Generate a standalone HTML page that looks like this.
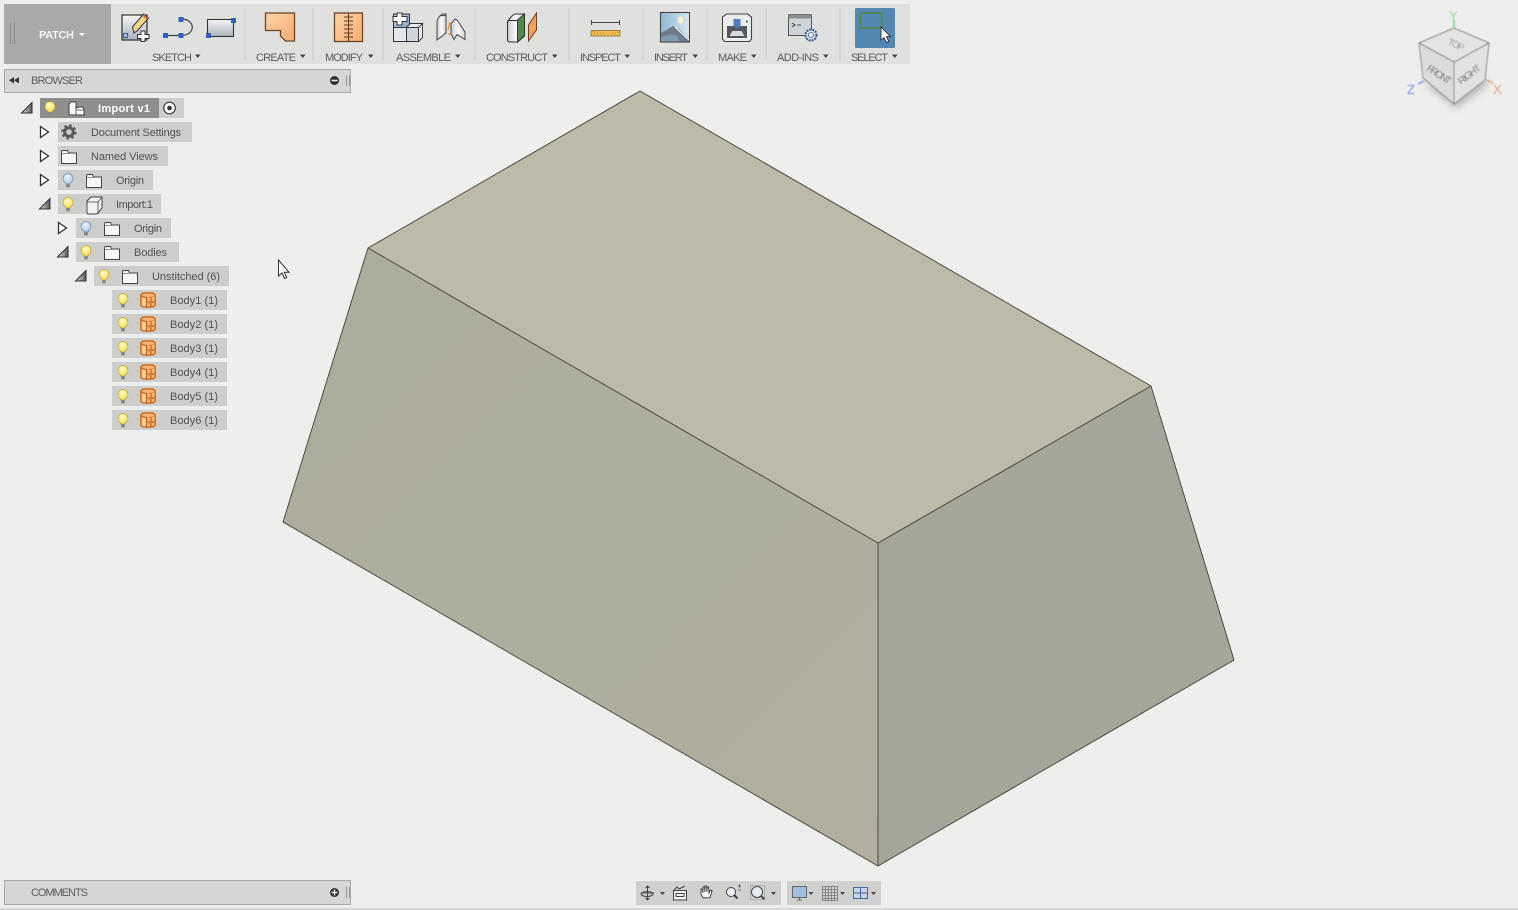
<!DOCTYPE html>
<html><head><meta charset="utf-8"><title>Fusion 360</title>
<style>
html,body{margin:0;padding:0;background:#eeeeed;width:1518px;height:910px;overflow:hidden}
svg{display:block}
text{font-family:"Liberation Sans",sans-serif}
.l{font-size:11px;fill:#5c5c5c}
.t{font-size:11px;fill:#525252}
</style></head><body>
<svg width="1518" height="910" viewBox="0 0 1518 910" xmlns="http://www.w3.org/2000/svg">
<defs>
<linearGradient id="gs" x1="0" y1="0" x2="0" y2="1"><stop offset="0" stop-color="#f6f6f6"/><stop offset="1" stop-color="#a9b2bc"/></linearGradient>
<linearGradient id="gw" x1="0" y1="0" x2="1" y2="0"><stop offset="0" stop-color="#c8ccd0"/><stop offset=".5" stop-color="#fafafa"/><stop offset="1" stop-color="#d0d3d6"/></linearGradient>
<linearGradient id="go" x1="0" y1="0" x2="1" y2="1"><stop offset="0" stop-color="#fdd2a4"/><stop offset="1" stop-color="#f6ae72"/></linearGradient>
<linearGradient id="gb" x1="0" y1="0" x2="1" y2="1"><stop offset="0" stop-color="#c8d8ea"/><stop offset="1" stop-color="#7fa3cc"/></linearGradient>
<linearGradient id="sky" x1="0" y1="0" x2="1" y2="0"><stop offset="0" stop-color="#8fb8d4"/><stop offset="1" stop-color="#d6e6ef"/></linearGradient>
<linearGradient id="tri" x1="0" y1="0" x2="1" y2="0"><stop offset="0" stop-color="#e8e8e8"/><stop offset="1" stop-color="#555"/></linearGradient>
<linearGradient id="lf" gradientUnits="userSpaceOnUse" x1="330" y1="300" x2="870" y2="850"><stop offset="0" stop-color="#adad9d"/><stop offset=".75" stop-color="#afae9e"/><stop offset="1" stop-color="#b3ae9f"/></linearGradient>
<radialGradient id="by" cx=".45" cy=".35" r=".7"><stop offset="0" stop-color="#fffdc4"/><stop offset="1" stop-color="#fbdc4a"/></radialGradient>
<radialGradient id="bb" cx=".45" cy=".35" r=".7"><stop offset="0" stop-color="#f0f6fc"/><stop offset="1" stop-color="#a5c3e4"/></radialGradient>
<symbol id="by1" viewBox="0 0 12 15" overflow="visible"><path d="M6 .6a4.900 4.900 0 0 0-2.700 9c.5.300.7.800.7 1.400h4c0-.6.200-1.100.7-1.400A4.900 4.900 0 0 0 6 .6z" fill="url(#by)" stroke="#c4a540" stroke-width=".8"/><rect x="4" y="11" width="4" height="3.400" rx="1.200" fill="#8a8a82"/></symbol>
<symbol id="bb1" viewBox="0 0 12 15" overflow="visible"><path d="M6 .6a4.900 4.900 0 0 0-2.700 9c.5.300.7.800.7 1.400h4c0-.6.200-1.100.7-1.400A4.900 4.900 0 0 0 6 .6z" fill="url(#bb)" stroke="#6f8fb4" stroke-width=".8"/><rect x="4" y="11" width="4" height="3.400" rx="1.200" fill="#80868c"/></symbol>
<symbol id="fld" viewBox="0 0 16 14" overflow="visible"><path d="M.5 1.500a1 1 0 0 1 1-1h5l1 2.500h8v10.500h-15z" fill="#f7f7f6" stroke="#444" stroke-width="1"/><path d="M.5 3.500h7" fill="none" stroke="#666" stroke-width=".7"/></symbol>
<symbol id="body" viewBox="0 0 16 16" overflow="visible"><path d="M.8 3C.8 .2 15.200 .2 15.200 3v10c0 2.800-14.400 2.800-14.400 0z" fill="#f7b278" stroke="#d4711f" stroke-width="1.500"/><path d="M1 3.500c1.500 1.500 4 2 5.500 2V15" fill="none" stroke="#d4711f" stroke-width="1.400"/><path d="M6.500 5.500c3 0 6-.6 8.500-2" fill="none" stroke="#e28a3c" stroke-width="1"/><path d="M11 5v10M7 10h8" stroke="#d4711f" stroke-width="1.400"/><rect x="2.200" y="6" width="3.300" height="7.500" fill="#fcd6b2"/></symbol>
<filter id="blur" x="-40%" y="-40%" width="180%" height="180%"><feGaussianBlur stdDeviation="4"/></filter>
<filter id="soft" x="-10%" y="-10%" width="120%" height="120%"><feGaussianBlur stdDeviation=".45"/></filter>
</defs>

<rect width="1518" height="910" fill="#eeeeed"/>

<!-- solid -->
<polygon points="640,91 1151,386 878,543 368,248" fill="#bdbaa9"/>
<polygon points="368,248 878,543 878,866 283,522" fill="url(#lf)"/>
<polygon points="878,543 1151,386 1234,660 878,866" fill="#a5a599"/>
<path d="M640 91L1151 386L1234 660L878 866L283 522L368 248Z M368 248L878 543L1151 386 M878 543V866" fill="none" stroke="#40403a" stroke-width=".9"/>

<!-- toolbar -->
<rect x="4" y="4" width="906" height="60" fill="#e0e0df"/>
<rect x="4" y="4" width="107" height="60" fill="#a9a9a7"/>
<path d="M10.500 22v22M14.500 22v22" stroke="#8b8b89" stroke-width="1"/>
<text x="39" y="38.500" font-size="11" font-weight="bold" fill="#f2f2f2" textLength="35">PATCH</text>
<path d="M79 33h6l-3 3.500z" fill="#f2f2f2"/>
<g stroke="#cfcfce" stroke-width="1.500"><path d="M245 8v52M313 8v52M383 8v52M475 8v52M569 8v52M643 8v52M707 8v52M766 8v52M840 8v52"/></g>

<!-- sketch icons -->
<rect x="122" y="15" width="25" height="25" fill="url(#gs)" stroke="#333" stroke-width="1.200"/>
<path d="M134 33l-1.500-6 11-13 5 4-11 12.500z" fill="#f7d88a" stroke="#333" stroke-width="1"/>
<path d="M143 15l4.500 3.500" stroke="#c9664a" stroke-width="2.200"/>
<rect x="123.500" y="33.500" width="4" height="4" fill="none" stroke="#2f65c0" stroke-width="1.200"/>
<path d="M141 31h4v3.500h4v4h-4v3h-4v-3h-3.500v-4h3.500z" fill="#fff" stroke="#333" stroke-width="1"/>
<path d="M165 35.500H181C196 35.500 196 19 181 19" fill="none" stroke="#3c4048" stroke-width="1.200"/>
<g fill="#2f62bf"><rect x="163" y="33" width="5" height="5"/><rect x="178.500" y="33" width="5" height="5"/><rect x="178.500" y="17" width="5" height="5"/></g>
<rect x="207.500" y="19.500" width="26" height="17" fill="url(#gs)" stroke="#333" stroke-width="1.100"/>
<rect x="206" y="33" width="5" height="5" fill="#2f62bf"/><rect x="231" y="18" width="5" height="5" fill="#2f62bf"/>

<!-- create -->
<path d="M265.500 13h29v28h-9l-5-5v-5.500h-15z" fill="url(#go)" stroke="#6b4326" stroke-width="1.300"/>
<!-- modify -->
<rect x="334.500" y="13" width="28" height="28.500" fill="url(#go)" stroke="#6b4326" stroke-width="1.300"/>
<path d="M348.500 13v28M344 17h9M344 21h9M344 25h9M344 29h9M344 33h9M344 37h9" stroke="#5e3b22" stroke-width="1"/>
<!-- assemble -->
<path d="M393.500 14h16v13.500h-16z" fill="url(#gb)" stroke="#333" stroke-width="1"/>
<rect x="393.500" y="27.500" width="13" height="14" fill="#e3e7ec" stroke="#333"/>
<rect x="406.500" y="27.500" width="12" height="14" fill="#ced4db" stroke="#333"/>
<path d="M418.500 27.500l4-4v14l-4 4zM406.500 27.500l4-4h12l-4 4z" fill="#eceef0" stroke="#333" stroke-width=".9"/>
<path d="M397 13h5v3.500h5v5h-5v3.500h-5v-3.500h-4v-5h4z" fill="#fff" stroke="#333"/>
<path d="M437 40V22c0-3 4-8 6-8h3v19zM441 16c2-1 5-1 5 1" fill="url(#gw)" stroke="#444"/>
<path d="M451 34V24l4-5 2 1 8 12v7.500l-8-5-3 5z" fill="url(#gw)" stroke="#444"/>
<path d="M448 30l2-8M448 34h3" stroke="#e28f2c" stroke-width="1.300"/>

<!-- construct -->
<path d="M507.500 23c0-3 6-9 8-9h9v22l-7 6h-8c-1 0-2-1-2-2z" fill="url(#gw)" stroke="#333" stroke-width="1.100"/>
<path d="M517.500 20l7-6v22l-7 6z" fill="#4f8a48" stroke="#333"/>
<path d="M507.500 20.500h10" stroke="#333"/>
<path d="M528.500 25l8-12v17l-8 11z" fill="#f0a25c" stroke="#6e3f20"/>
<!-- inspect -->
<path d="M591.500 20v5M619.500 20v5M591.500 22.500h28" stroke="#444" stroke-width="1"/>
<rect x="591" y="30.500" width="29" height="5.500" fill="#eebd50" stroke="#8e7028" stroke-width=".8"/>
<path d="M593 31v2h25v-2" fill="none" stroke="#b58f30" stroke-width="1.200" stroke-dasharray="1 2"/>
<!-- insert -->
<rect x="660.500" y="12.500" width="29" height="29.500" fill="url(#sky)" stroke="#444" stroke-width="1.100"/>
<ellipse cx="680.500" cy="20" rx="2.800" ry="3.800" fill="#fbf1d2"/>
<path d="M661 41.500V33l12-7 6 3 10 10v2.500z" fill="#6e7b88"/>
<path d="M661 41.500V37l10-3 6 2 3 5.500z" fill="#7f9bb2"/>
<path d="M675 27l14 13" stroke="#edf2f6" stroke-width="1.200"/>
<!-- make -->
<path d="M722.500 17l4-3h21l4 3v22l-2 2.500h-25l-2-2.500z" fill="#ececec" stroke="#444" stroke-width="1.100"/>
<rect x="727" y="26" width="20" height="12" fill="#55585c"/>
<path d="M733.500 19h7v7l-3.500 3-3.500-3z" fill="#4b7cc2"/>
<path d="M729.500 36l3-5h9l3 5z" fill="#d8dce0"/>
<rect x="746" y="20.500" width="2" height="2" fill="#2f8a3e"/>
<!-- add-ins -->
<rect x="788.500" y="14.500" width="23" height="21" fill="#cfd3d7" stroke="#555"/>
<rect x="788.500" y="14.500" width="23" height="4" fill="#8b8f92"/>
<path d="M792 23l3 2-3 2M797 25h4" fill="none" stroke="#444"/>
<circle cx="811" cy="35" r="5.500" fill="#dbe6f2" stroke="#3e5f88" stroke-width="2.200" stroke-dasharray="2 1"/>
<circle cx="811" cy="35" r="2.500" fill="#eef3f8" stroke="#3e5f88" stroke-width=".8"/>
<!-- select -->
<rect x="855" y="8" width="40" height="40" rx="1" fill="#5587b3"/>
<rect x="860.500" y="13" width="21" height="15" fill="none" stroke="#4f8a48" stroke-width="1.600"/>
<path d="M881 27v13l3-2.500 2.500 5 2.200-1-2.300-5h4.100z" fill="#fff" stroke="#222" stroke-width=".8"/>

<!-- toolbar labels -->
<text class="l" x="152" y="61" textLength="40">SKETCH</text>
<text class="l" x="256" y="61" textLength="40">CREATE</text>
<text class="l" x="325" y="61" textLength="38">MODIFY</text>
<text class="l" x="396" y="61" textLength="55">ASSEMBLE</text>
<text class="l" x="486" y="61" textLength="62">CONSTRUCT</text>
<text class="l" x="580" y="61" textLength="41">INSPECT</text>
<text class="l" x="654" y="61" textLength="34">INSERT</text>
<text class="l" x="718" y="61" textLength="29">MAKE</text>
<text class="l" x="777" y="61" textLength="42">ADD-INS</text>
<text class="l" x="851" y="61" textLength="37">SELECT</text>
<g fill="#444"><path d="M195 54.500h5.500l-2.750 3.500zM300 54.500h5.500l-2.750 3.500zM368 54.500h5.500l-2.750 3.500zM455 54.500h5.500l-2.750 3.500zM552 54.500h5.500l-2.750 3.500zM624.500 54.500h5.500l-2.750 3.500zM692.500 54.500h5.500l-2.750 3.500zM751 54.500h5.500l-2.750 3.500zM823 54.500h5.500l-2.750 3.500zM892 54.500h5.500l-2.750 3.500z"/></g>

<!-- browser bar -->
<rect x="4.500" y="69.500" width="346" height="23" fill="#d6d6d4" stroke="#a9a9a9"/>
<path d="M14 77v6.500l-5-3.200zM19 77v6.500l-5-3.200z" fill="#333"/>
<text x="31" y="84" class="l" textLength="52">BROWSER</text>
<circle cx="334.500" cy="80.500" r="4.500" fill="#2d2d2d"/><rect x="331.500" y="79.700" width="6" height="1.600" fill="#eee"/>
<path d="M346.500 75v11M349.500 75v11" stroke="#999" stroke-width="1"/>

<!-- tree backgrounds -->
<g fill="#cdcdcb">
<rect x="40" y="98" width="144" height="20"/>
<rect x="58" y="122" width="134" height="20"/>
<rect x="58" y="146" width="110" height="20"/>
<rect x="58" y="170" width="95" height="20"/>
<rect x="58" y="194" width="103" height="20"/>
<rect x="76" y="218" width="95" height="20"/>
<rect x="76" y="242" width="103" height="20"/>
<rect x="94" y="266" width="135" height="20"/>
<rect x="112" y="290" width="115" height="20"/>
<rect x="112" y="314" width="115" height="20"/>
<rect x="112" y="338" width="115" height="20"/>
<rect x="112" y="362" width="115" height="20"/>
<rect x="112" y="386" width="115" height="20"/>
<rect x="112" y="410" width="115" height="20"/>
</g>
<rect x="40" y="98" width="119" height="20" fill="#8e8e8c"/>

<!-- expanders -->
<g fill="#fff" stroke="#333" stroke-width="1.300">
<path d="M40.500 126.500l8 5.500-8 5.500zM40.500 150.500l8 5.500-8 5.500zM40.500 174.500l8 5.500-8 5.500zM58.500 222.500l8 5.500-8 5.500z"/>
</g>
<g fill="url(#tri)" stroke="#333" stroke-width="1">
<path d="M21.500 113l10.500-10.500V113z"/>
<path d="M39.500 209l10.500-10.500V209z"/>
<path d="M57.500 257l10.500-10.500V257z"/>
<path d="M75.500 281l10.500-10.500V281z"/>
</g>

<!-- bulbs -->
<use href="#by1" x="44" y="101" width="12" height="15"/>
<use href="#by1" x="62" y="197" width="12" height="15"/>
<use href="#by1" x="80" y="245" width="12" height="15"/>
<use href="#by1" x="98" y="269" width="12" height="15"/>
<use href="#by1" x="117" y="293" width="12" height="15"/>
<use href="#by1" x="117" y="317" width="12" height="15"/>
<use href="#by1" x="117" y="341" width="12" height="15"/>
<use href="#by1" x="117" y="365" width="12" height="15"/>
<use href="#by1" x="117" y="389" width="12" height="15"/>
<use href="#by1" x="117" y="413" width="12" height="15"/>
<use href="#bb1" x="62" y="173" width="12" height="15"/>
<use href="#bb1" x="80" y="221" width="12" height="15"/>

<!-- folders -->
<use href="#fld" x="61" y="150" width="16" height="14"/>
<use href="#fld" x="86" y="174" width="16" height="14"/>
<use href="#fld" x="104" y="222" width="16" height="14"/>
<use href="#fld" x="104" y="246" width="16" height="14"/>
<use href="#fld" x="122" y="270" width="16" height="14"/>

<!-- component icons -->
<path d="M69 104l2-2h5v6l3-1h4l1 3v5H70l-1-1z" fill="#f7f7f6" stroke="#444"/><path d="M76 108v7M76 110h8" fill="none" stroke="#444" stroke-width=".8"/>
<path d="M87 201l4-4h11v11l-4 5c-1 1-2 1-3 1h-7c-1 0-1-1-1-2z" fill="#f2f2f1" stroke="#444"/><path d="M87 202h11l4-5M98 202v12" fill="none" stroke="#444" stroke-width=".8"/>
<circle cx="69" cy="132" r="4.300" fill="none" stroke="#5a5a5a" stroke-width="3"/>
<circle cx="69" cy="132" r="6.600" fill="none" stroke="#5a5a5a" stroke-width="2" stroke-dasharray="2.600 2.580"/>

<use href="#body" x="140" y="292" width="16" height="16"/>
<use href="#body" x="140" y="316" width="16" height="16"/>
<use href="#body" x="140" y="340" width="16" height="16"/>
<use href="#body" x="140" y="364" width="16" height="16"/>
<use href="#body" x="140" y="388" width="16" height="16"/>
<use href="#body" x="140" y="412" width="16" height="16"/>

<!-- radio -->
<circle cx="169.500" cy="108" r="5.800" fill="#f5f5f5" stroke="#333" stroke-width="1.100"/><circle cx="169.500" cy="108" r="2.300" fill="#333"/>

<!-- tree text -->
<text x="98" y="112" font-size="11" font-weight="bold" fill="#fff" textLength="52">Import v1</text>
<text class="t" x="91" y="136" textLength="90">Document Settings</text>
<text class="t" x="91" y="160" textLength="67">Named Views</text>
<text class="t" x="116" y="184" textLength="28">Origin</text>
<text class="t" x="116" y="208" textLength="37">Import:1</text>
<text class="t" x="134" y="232" textLength="28">Origin</text>
<text class="t" x="134" y="256" textLength="33">Bodies</text>
<text class="t" x="152" y="280" textLength="68">Unstitched (6)</text>
<text class="t" x="170" y="304" textLength="48">Body1 (1)</text>
<text class="t" x="170" y="328" textLength="48">Body2 (1)</text>
<text class="t" x="170" y="352" textLength="48">Body3 (1)</text>
<text class="t" x="170" y="376" textLength="48">Body4 (1)</text>
<text class="t" x="170" y="400" textLength="48">Body5 (1)</text>
<text class="t" x="170" y="424" textLength="48">Body6 (1)</text>

<!-- mouse cursor -->
<path d="M278.500 260v16l3.500-3 2.500 5.500 2.200-1-2.500-5.200h4.800z" fill="#fff" stroke="#333" stroke-width="1"/>

<!-- view cube -->
<path d="M1424 82l32 26 32-24-4-6z" fill="#8a8a8a" opacity=".6" filter="url(#blur)"/>
<g filter="url(#soft)">
<polygon points="1454,28 1489,43 1454,62 1419,43" fill="#e4e4e3"/>
<polygon points="1419,43 1454,62 1454,104 1423,78" fill="#dcdcdb"/>
<polygon points="1454,62 1489,43 1485,80 1454,104" fill="#e2e2e1"/>
<path d="M1454 28l35 15-4 37-31 24-31-26-4-35zM1419 43l35 19 35-19M1454 62v42" fill="none" stroke="#858583" stroke-width="1"/>
<text transform="translate(1447,44) rotate(25)" font-size="9.500" fill="#999" textLength="17">TOP</text>
<text transform="translate(1426,70) rotate(33)" font-size="10" fill="#7a7a7a" textLength="27">FRONT</text>
<text transform="translate(1461,85) rotate(-37)" font-size="10" fill="#7a7a7a" textLength="26">RIGHT</text>
<path d="M1454 28V20" stroke="#8fdc9c" stroke-width="2"/>
<text x="1449" y="20" font-size="13" fill="#8fdc9c">Y</text>
<path d="M1424 81l-6 3" stroke="#7f8fe0" stroke-width="1.300"/>
<text x="1407" y="94" font-size="13" fill="#7f8fe6">Z</text>
<path d="M1486 80l7 3" stroke="#e8a594" stroke-width="1.500"/>
<text x="1493" y="94" font-size="13" fill="#ee9f92">X</text>
</g>

<!-- bottom toolbar -->
<rect x="636" y="881" width="145" height="24" fill="#d0d0cf"/>
<rect x="787" y="881" width="94" height="24" fill="#d0d0cf"/>
<g fill="none" stroke="#444" stroke-width="1">
<path d="M647.500 886v14M641 893h13M645.500 888l2-2 2 2M645.500 898l2 2 2-2"/>
<ellipse cx="647" cy="894" rx="6" ry="2.500"/>
<rect x="673.500" y="890.500" width="13" height="9.500" fill="#f2f2f2"/><path d="M676 893.500h8v3h-8zM674 890l3-3 2 2 6-3"/>
<path d="M701 894v-5l1.500 0 .5 4v-6h1.500l.5 5v-6h1.500l.5 6v-5h1.500l.5 6 1.500-3 1.500.7-2 7h-7z" fill="#fff"/>
<circle cx="731" cy="892" r="4.500" fill="#eef2f7"/>
<path d="M734 895l3.500 3.500" stroke-width="2"/><path d="M738 886h3M739.500 884.500v3M738 890h3" stroke-width=".8"/>
<circle cx="757" cy="892" r="5.500" fill="#e6edf4"/><path d="M761 896l3.500 3.500" stroke-width="2"/>
<rect x="750.500" y="885.500" width="14" height="14" stroke-dasharray="1 1" stroke="#777" stroke-width=".7"/>
<rect x="792.500" y="886.500" width="14" height="11" fill="#a0bfdc" stroke="#666"/><path d="M797 900h5M799.500 897.500v2.500" stroke="#666"/>
<path d="M822.500 886.500h15v14h-15zM825.500 886.500v14M828.500 886.500v14M831.500 886.500v14M834.500 886.500v14M822.500 889.500h15M822.500 892.500h15M822.500 895.500h15M822.500 898.500h15" stroke="#777" stroke-width=".8" fill="#d2d2d1"/>
<path d="M853.500 887.500h14v11h-14zM860.500 887.500v11M853.500 893h14" stroke="#446a9c" fill="#c6d4e4"/>
</g>
<g fill="#444"><path d="M660 892h5l-2.500 3zM771 892h5l-2.500 3zM808.500 892h5l-2.500 3zM840 892h5l-2.500 3zM871 892h5l-2.500 3z"/></g>

<!-- comments -->
<rect x="4.500" y="880.500" width="346" height="24" fill="#d6d6d4" stroke="#a9a9a9"/>
<text x="31" y="896" class="l" textLength="57">COMMENTS</text>
<circle cx="334.500" cy="892.500" r="4.500" fill="#2d2d2d"/><path d="M331.500 892.500h6M334.500 889.500v6" stroke="#eee" stroke-width="1.400"/>
<path d="M346.500 887v11M349.500 887v11" stroke="#999" stroke-width="1"/>
<rect x="0" y="908" width="1518" height="2" fill="#d8d8d8"/>
</svg>
</body></html>
